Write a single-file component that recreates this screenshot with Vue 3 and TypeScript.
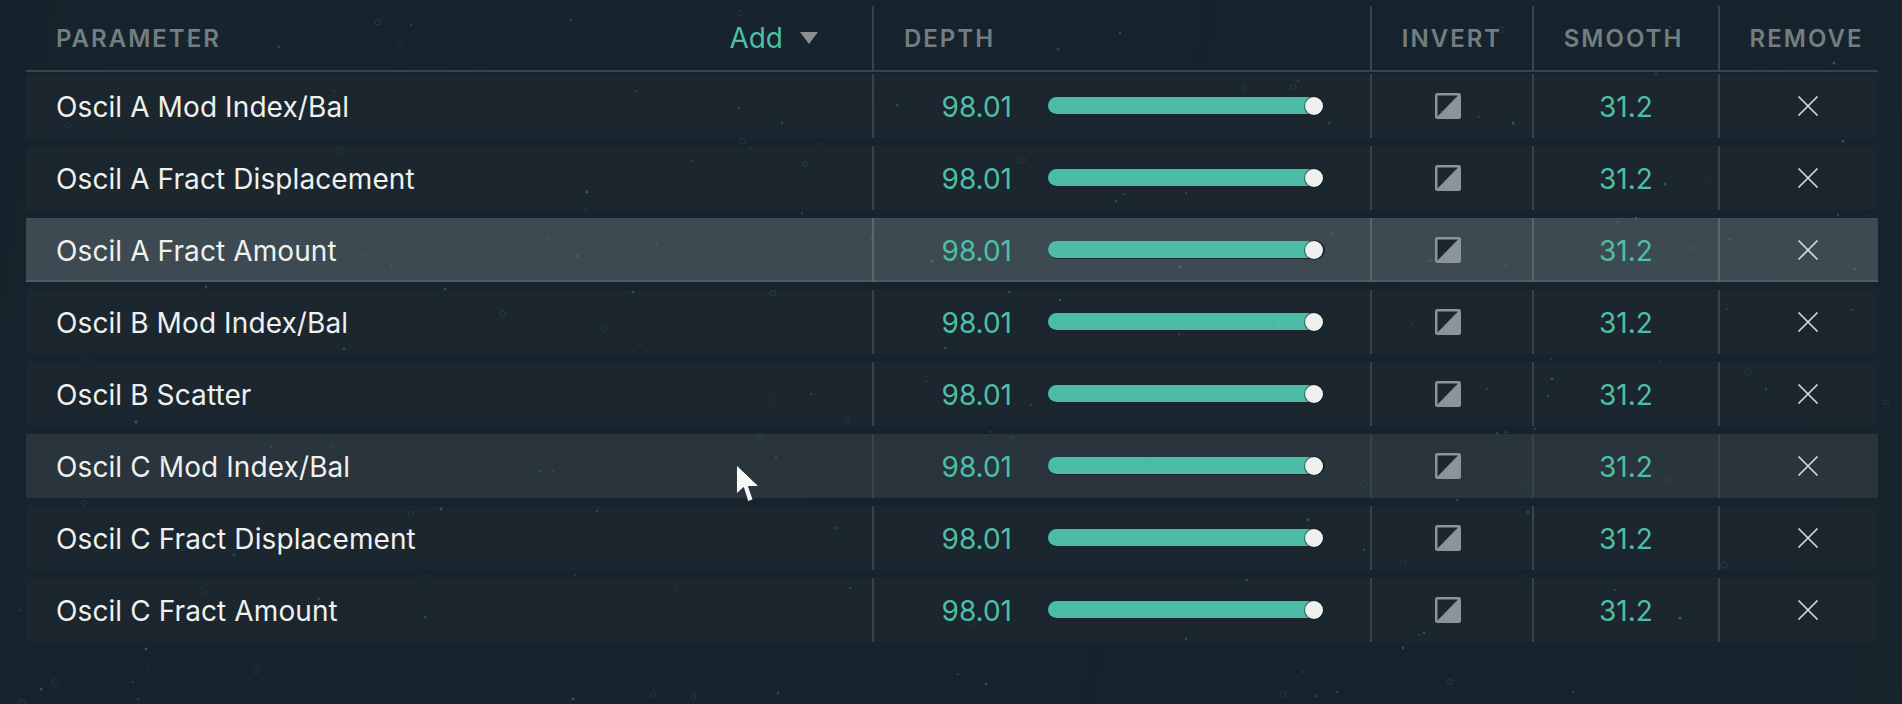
<script setup lang="ts">
const params = [
  'Oscil A Mod Index/Bal',
  'Oscil A Fract Displacement',
  'Oscil A Fract Amount',
  'Oscil B Mod Index/Bal',
  'Oscil B Scatter',
  'Oscil C Mod Index/Bal',
  'Oscil C Fract Displacement',
  'Oscil C Fract Amount',
]

// row states in the shot: one selected, one hovered
const selectedRow = 2
const hoveredRow = 5

// seeded so the dust on the panel stays the same between runs
let seed = 1337
const rand = () => {
  seed = (seed * 16807) % 2147483647
  return seed / 2147483647
}
const specks = Array.from({ length: 190 }, () => ({
  x: Math.round(rand() * 1902),
  y: Math.round(rand() * 704),
  r: 0.7 + rand() * 0.9,
  ring: rand() > 0.72,
  o: 0.18 + rand() * 0.3,
}))
</script>

<template>
  <div class="panel">
    <div class="table">
      <div class="head">
        <div class="cell param-head">
          <span class="label">PARAMETER</span>
          <span class="add">Add<i class="caret"></i></span>
        </div>
        <div class="cell depth-head"><span class="label">DEPTH</span></div>
        <div class="cell center"><span class="label">INVERT</span></div>
        <div class="cell center smooth-head"><span class="label">SMOOTH</span></div>
        <div class="cell center remove-head"><span class="label">REMOVE</span></div>
      </div>

      <div
        v-for="(name, i) in params"
        :key="name"
        class="row"
        :class="{ selected: i === selectedRow, hovered: i === hoveredRow }"
      >
        <div class="cell name">{{ name }}</div>
        <div class="cell depth">
          <span class="value">98.01</span>
          <div class="track">
            <div class="fill"></div>
            <div class="knob"></div>
          </div>
        </div>
        <div class="cell center invert">
          <svg width="28" height="28" viewBox="0 0 28 28">
            <rect x="1" y="1" width="26" height="26" rx="2.5" fill="#8b9597" />
            <path d="M3.5 3.5H24L3.5 24.5Z" fill="#1c2630" />
          </svg>
        </div>
        <div class="cell center value smooth">31.2</div>
        <div class="cell center remove">
          <svg width="22" height="22" viewBox="0 0 22 22">
            <path d="M1.5 1.5L20.5 20.5M20.5 1.5L1.5 20.5" stroke="#d5dad8" stroke-width="1.7" fill="none" />
          </svg>
        </div>
      </div>
    </div>

    <svg class="dust" width="1902" height="704" viewBox="0 0 1902 704">
      <template v-for="(s, i) in specks" :key="i">
        <circle
          v-if="s.ring"
          :cx="s.x"
          :cy="s.y"
          :r="s.r + 1.6"
          fill="none"
          stroke="#2f6a66"
          stroke-width="0.8"
          :opacity="s.o"
        />
        <circle v-else :cx="s.x" :cy="s.y" :r="s.r" fill="#2f8a7e" :opacity="s.o + 0.15" />
      </template>
    </svg>

    <svg class="cursor" width="26" height="40" viewBox="0 0 26 40">
      <path d="M1.5 1V30L8.5 23.5L13 37.5L18 35.5L13.5 22.5H24Z" fill="#f6f7f7" stroke="#1a2229" stroke-width="0.8" />
    </svg>
  </div>
</template>

<style scoped>
.panel {
  position: relative;
  width: 1902px;
  height: 704px;
  overflow: hidden;
  box-sizing: border-box;
  padding: 6px 24px 0 26px;
  background: linear-gradient(100deg, #14232b 0%, #17242d 8%, #17232c 60%, #16242c 100%);
  font-family: Inter, 'Liberation Sans', sans-serif;
}

.head,
.row {
  display: grid;
  grid-template-columns: 846px 498px 162px 186px 160px;
}

.head {
  height: 66px;
  box-sizing: border-box;
  border-bottom: 2px solid #38434b;
}

.row {
  height: 64px;
  margin-top: 8px;
  background: #1c262f;
}

.head + .row {
  margin-top: 2px;
}

.row.hovered {
  background: #2a343d;
}

.row.selected {
  background: #3e4a52;
  box-shadow: inset 0 1px 0 #434f56, inset 0 -2px 0 #4f5a61;
}

.cell {
  display: flex;
  align-items: center;
  box-sizing: border-box;
  border-left: 2px solid #38434b;
}

.cell:first-child {
  border-left: none;
}

.row.selected .cell {
  border-left-color: #5c676d;
}

.row.selected .cell:first-child {
  border-left: none;
}

.center {
  justify-content: center;
}

.label {
  font-size: 24px;
  font-weight: 600;
  letter-spacing: 2px;
  color: #727e80;
}

.param-head {
  padding: 0 54px 0 30px;
  justify-content: space-between;
}

.add {
  display: flex;
  align-items: center;
  font-size: 28px;
  color: #4cbfa6;
}

.caret {
  width: 0;
  height: 0;
  margin-left: 17px;
  border-left: 9px solid transparent;
  border-right: 9px solid transparent;
  border-top: 12px solid #8a9090;
}

.depth-head {
  padding-left: 30px;
}

.smooth-head {
  padding-right: 5px;
}

.remove-head {
  padding-left: 15px;
}

.name {
  padding: 1px 0 0 30px;
  font-size: 28px;
  letter-spacing: 0.1px;
  color: #eef1ee;
}

.value {
  font-size: 28px;
  color: #4cbfa6;
}

.depth {
  padding-left: 66px;
}

.depth .value {
  width: 72px;
  padding-top: 1px;
  text-align: right;
}

.track {
  position: relative;
  width: 277px;
  height: 18px;
  margin-left: 36px;
  border-radius: 9px;
  background: #1a242d;
}

.fill {
  width: 272px;
  height: 17px;
  border-radius: 8.5px;
  background: #4cbca6;
}

.knob {
  position: absolute;
  top: 0;
  right: 2px;
  width: 18px;
  height: 18px;
  border-radius: 50%;
  background: #eef1ec;
  box-shadow: 0 0 0 1px rgba(20, 30, 38, 0.6);
}

.invert {
  padding-right: 8px;
}

.smooth {
  padding-top: 1px;
}

.remove {
  padding-left: 17px;
}

.dust {
  position: absolute;
  top: 0;
  left: 0;
  pointer-events: none;
}

.cursor {
  position: absolute;
  left: 735px;
  top: 464px;
  pointer-events: none;
}
</style>
